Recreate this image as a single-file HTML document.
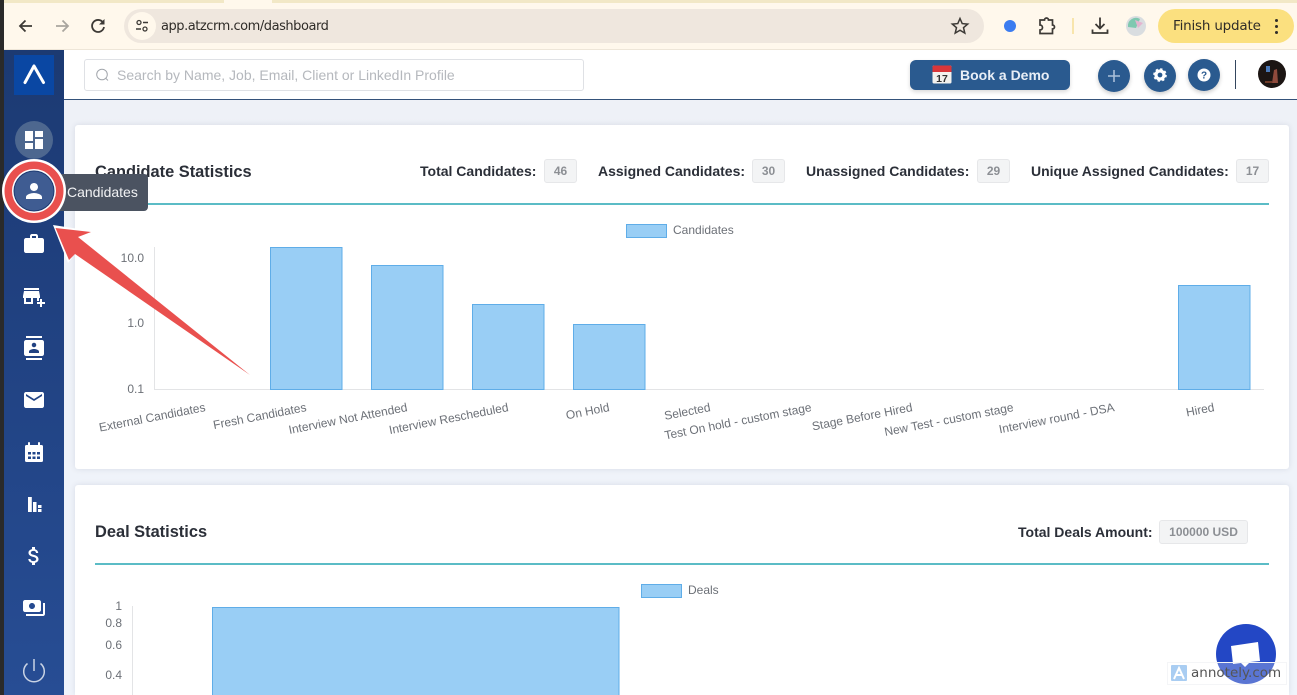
<!DOCTYPE html>
<html><head><meta charset="utf-8"><style>
html,body{margin:0;padding:0;width:1297px;height:695px;overflow:hidden}
body{background:#f0f4fb;font-family:"Liberation Sans",sans-serif}
#w{position:absolute;left:0;top:0;width:1297px;height:695px;overflow:hidden}
.a{position:absolute}
.t{position:absolute;white-space:nowrap;font-weight:700;font-size:14px;color:#2b2f38;line-height:16px}
.h{position:absolute;white-space:nowrap;font-weight:700;font-size:16.4px;color:#2b2f38;line-height:20px}
.b{position:absolute;box-sizing:border-box;background:#f3f4f5;border:1px solid #e6e7e9;border-radius:3px;color:#8c8f94;font-weight:700;font-size:12px;text-align:center;height:24px;line-height:22px}
svg text{font-family:"Liberation Sans",sans-serif}
.card{position:absolute;left:75px;width:1214px;background:#fff;border-radius:3px;box-shadow:0 0 6px rgba(60,70,100,.13)}
</style></head><body><div id="w">
<div class="a" style="left:64px;top:100px;width:1233px;height:595px;background:linear-gradient(#eef1f7,#f0f4fb)"></div>
<div class="a" style="left:0;top:0;width:4px;height:695px;background:#2a2a2a"></div>
<div class="a" style="left:4px;top:0;width:1293px;height:50px;background:#fff8ec;border-bottom:1px solid #eee6d8;box-sizing:border-box"></div>
<div class="a" style="left:4px;top:0;width:1293px;height:3px;background:#f2e8c6"></div>
<div class="a" style="left:224px;top:0;width:48px;height:3px;background:#fff8ec"></div>
<div class="a" style="left:124px;top:9px;width:860px;height:34px;border-radius:17px;background:#efe7de"></div>
<div class="a" style="left:128px;top:12px;width:28px;height:28px;border-radius:14px;background:#fff8ec"></div>
<div class="a" style="left:161px;top:18px;line-height:18px;color:#2f2c28;font-family:'DejaVu Sans',sans-serif;font-size:13px;letter-spacing:-.46px;white-space:nowrap">app.atzcrm.com/dashboard</div>
<svg class="a" style="left:0;top:0" width="1297" height="50" fill="none">
<path d="M32 26H20M25.5 20.5 20 26l5.5 5.500" stroke="#3d3a36" stroke-width="1.8"/>
<path d="M56 26H68M62.5 20.5 68 26l-5.5 5.500" stroke="#a9a59e" stroke-width="1.8"/>
<path d="M103 22.5A6 6 0 1 0 104 27" stroke="#3d3a36" stroke-width="1.8"/><path d="M104.5 19v5.500H99z" fill="#3d3a36"/>
<circle cx="139" cy="22.5" r="2" stroke="#3d3a36" stroke-width="1.3"/><path d="M143 22.5h5M136 29h5" stroke="#3d3a36" stroke-width="1.5"/><circle cx="145" cy="29" r="2" stroke="#3d3a36" stroke-width="1.3"/>
<path d="M960 18.5l2.200 5.100 5.500.5-4.200 3.600 1.300 5.400-4.800-2.900-4.800 2.900 1.300-5.400-4.200-3.600 5.500-.5z" stroke="#3d3a36" stroke-width="1.5"/>
<circle cx="1010" cy="26" r="6" fill="#3b7cf0"/>
<path d="M1040 20h4.500a2 2 0 0 1 4 0h4v5a2 2 0 0 1 0 4v4.500h-12.500v-3.500a2.500 2.500 0 0 0 0-5z" stroke="#3d3a36" stroke-width="1.7"/>
<path d="M1073 18v16" stroke="#f5df97" stroke-width="1.5"/>
<path d="M1100 17.5v10.500M1095.5 24l4.500 4.500 4.500-4.500M1092.5 29.5v3.500h15v-3.500" stroke="#3d3a36" stroke-width="1.8"/>
<circle cx="1136" cy="26" r="10" fill="#d9dde0"/><path d="M1128 27a8 8 0 0 1 12-8l-4 9z" fill="#7fc8b0"/><path d="M1135 20l8 3-5 5z" fill="#e4b5cf"/>
</svg>
<div class="a" style="left:1158px;top:9px;width:136px;height:34px;border-radius:17px;background:#fbe07f"></div>
<div class="a" style="left:1173px;top:17px;font-family:'DejaVu Sans',sans-serif;font-size:13.5px;line-height:18px;color:#2f2c28;letter-spacing:-.2px;white-space:nowrap">Finish update</div>
<div class="a" style="left:1275px;top:19px;width:3px;height:3px;border-radius:2px;background:#2f2c28;box-shadow:0 6px #2f2c28,0 12px #2f2c28"></div>

<div class="a" style="left:64px;top:50px;width:1233px;height:50px;background:#fff;border-bottom:1px solid #34527a;box-sizing:border-box"></div>
<div class="a" style="left:84px;top:59px;width:500px;height:32px;box-sizing:border-box;border:1px solid #dfe1e5;border-radius:3px;background:#fff"></div>
<svg class="a" style="left:95px;top:67px" width="16" height="16" fill="none"><circle cx="7" cy="7.5" r="5.3" stroke="#a3a7ad" stroke-width="1"/><path d="M11 11.5l2 2" stroke="#a3a7ad"/></svg>
<div class="a" style="left:117px;top:67px;font-size:14px;line-height:16px;color:#b5b8bd;white-space:nowrap">Search by Name, Job, Email, Client or LinkedIn Profile</div>

<div class="a" style="left:910px;top:60px;width:160px;height:30px;border-radius:6px;background:#2a5a8f;box-shadow:0 2px 4px rgba(0,0,0,.15)"></div>
<svg class="a" style="left:932px;top:65px" width="20" height="20"><rect x="0.5" y="0.5" width="19" height="18" rx="1.5" fill="#f3f1ee"/><path d="M0.5 7V2a1.500 1.500 0 0 1 1.500-1.500h16a1.500 1.500 0 0 1 1.500 1.500v5z" fill="#d9363a"/><text x="10" y="17" font-size="10.5" font-weight="700" text-anchor="middle" fill="#333">17</text></svg>
<div class="a" style="left:960px;top:67px;font-weight:700;font-size:14px;line-height:16px;color:#e8eef6;white-space:nowrap">Book a Demo</div>
<div class="a" style="left:1098px;top:60px;width:32px;height:32px;border-radius:16px;background:#2a5a8f;box-shadow:0 2px 4px rgba(0,0,0,.2)"></div>
<div class="a" style="left:1144px;top:60px;width:32px;height:32px;border-radius:16px;background:#2a5a8f;box-shadow:0 2px 4px rgba(0,0,0,.2)"></div>
<div class="a" style="left:1188px;top:59px;width:32px;height:32px;border-radius:16px;background:#2a5a8f;box-shadow:0 2px 4px rgba(0,0,0,.2)"></div>
<svg class="a" style="left:1090px;top:50px" width="207" height="50" fill="none">
<path d="M24 20v12M18 26h12" stroke="#a9bfd9" stroke-width="1.6"/>
<circle cx="70" cy="25" r="4" stroke="#fff" stroke-width="3.2"/><circle cx="70" cy="25" r="5.8" stroke="#fff" stroke-width="2" stroke-dasharray="2.3 2.25"/>
<circle cx="114" cy="25" r="6.5" fill="#fff"/><text x="114" y="28.5" font-size="10" font-weight="700" text-anchor="middle" fill="#2a5a8f">?</text>
<path d="M145.5 10v29" stroke="#34465e" stroke-width="1"/>
<circle cx="182" cy="24" r="14" fill="#1c1513"/><path d="M182 33l2-13 3-1 1 14z" fill="#8f4a3c"/><rect x="176" y="16" width="4" height="6" fill="#4b79b8"/><path d="M175 31h7v2h-7z" fill="#6e3a28"/>
</svg>

<div class="a" style="left:4px;top:50px;width:60px;height:645px;background:linear-gradient(#1c3a72,#1f3f7d 30%,#274d94)"></div>
<div class="a" style="left:14px;top:55px;width:40px;height:40px;background:#0a47a3"></div>
<svg class="a" style="left:14px;top:55px" width="40" height="40" fill="none"><path d="M11 27.500 20 11l9.500 16.500" stroke="#fff" stroke-width="3" stroke-linecap="round" stroke-linejoin="round"/></svg>
<div class="a" style="left:15px;top:121px;width:38px;height:38px;border-radius:19px;background:#4d678f"></div>

<div class="card" style="top:125px;height:344px"></div>
<div class="card" style="top:485px;height:210px;border-radius:3px 3px 0 0"></div>

<div class="h" style="left:95px;top:162px">Candidate Statistics</div>
<div class="t" style="left:420px;top:163px">Total Candidates:</div>
<div class="b" style="left:544px;top:159px;width:33px">46</div>
<div class="t" style="left:598px;top:163px">Assigned Candidates:</div>
<div class="b" style="left:752px;top:159px;width:33px">30</div>
<div class="t" style="left:806px;top:163px">Unassigned Candidates:</div>
<div class="b" style="left:977px;top:159px;width:33px">29</div>
<div class="t" style="left:1031px;top:163px">Unique Assigned Candidates:</div>
<div class="b" style="left:1236px;top:159px;width:33px">17</div>
<div class="a" style="left:95px;top:203px;width:1174px;height:2px;background:#5bbcc6"></div>

<svg class="a" style="left:0;top:0" width="1297" height="695" font-size="12" fill="#6c7077">
<rect x="626.5" y="224.5" width="40" height="13" fill="#99cef5" stroke="#5fade8"/>
<text x="673" y="234">Candidates</text>
<path d="M154.5 247v143M154 389.5h1110" stroke="#e3e4e6" fill="none"/>
<text x="144" y="262" text-anchor="end">10.0</text><text x="144" y="327" text-anchor="end">1.0</text><text x="144" y="393" text-anchor="end">0.1</text>
<g fill="#99cef5" stroke="#5fade8">
<rect x="270.5" y="247.5" width="71.500" height="142"/>
<rect x="371.5" y="265.5" width="71.500" height="124"/>
<rect x="472.5" y="304.5" width="71.500" height="85"/>
<rect x="573.5" y="324.5" width="71.500" height="65"/>
<rect x="1178.5" y="285.5" width="71.500" height="104"/>
</g>
<g text-anchor="end">
<text transform="translate(206,411) rotate(-11)">External Candidates</text>
<text transform="translate(307,411) rotate(-11)">Fresh Candidates</text>
<text transform="translate(408,411) rotate(-11)">Interview Not Attended</text>
<text transform="translate(509,411) rotate(-11)">Interview Rescheduled</text>
<text transform="translate(610,411) rotate(-11)">On Hold</text>
<text transform="translate(711,411) rotate(-11)">Selected</text>
<text transform="translate(812,411) rotate(-11)">Test On hold - custom stage</text>
<text transform="translate(913,411) rotate(-11)">Stage Before Hired</text>
<text transform="translate(1014,411) rotate(-11)">New Test - custom stage</text>
<text transform="translate(1115,411) rotate(-11)">Interview round - DSA</text>
<text transform="translate(1215,411) rotate(-11)">Hired</text>
</g>
<rect x="641.5" y="584.5" width="40" height="13" fill="#99cef5" stroke="#5fade8"/>
<text x="688" y="594">Deals</text>
<path d="M132.5 606v89" stroke="#e3e4e6" fill="none"/>
<text x="122" y="610" text-anchor="end">1</text><text x="122" y="627" text-anchor="end">0.8</text><text x="122" y="649" text-anchor="end">0.6</text><text x="122" y="679" text-anchor="end">0.4</text>
<rect x="212.5" y="607.5" width="406.500" height="90" fill="#99cef5" stroke="#5fade8"/>
</svg>

<div class="h" style="left:95px;top:522px">Deal Statistics</div>
<div class="t" style="left:1018px;top:524px">Total Deals Amount:</div>
<div class="b" style="left:1159px;top:520px;width:89px">100000 USD</div>
<div class="a" style="left:95px;top:563px;width:1174px;height:2px;background:#5bbcc6"></div>

<svg class="a" style="left:0;top:0" width="70" height="695" fill="#fff">
<path transform="translate(22,128)" d="M3 13h8V3H3v10zm0 8h8v-6H3v6zm10 0h8V11h-8v10zm0-18v6h8V3h-8z"/>
<path transform="translate(22,232)" d="M20 6h-4V4c0-1.110-.89-2-2-2h-4c-1.110 0-2 .89-2 2v2H4c-1.110 0-1.990.89-1.990 2L2 19c0 1.110.89 2 2 2h16c1.110 0 2-.89 2-2V8c0-1.110-.89-2-2-2zm-6 0h-4V4h4v2z"/>
<path transform="translate(22,284)" d="M15 17h2v-3h1v-2l-1-5H2l-1 5v2h1v6h9v-6h4v3zm-6 1H4v-4h5v4zM2 4h15v2H2zM20 18v-3h-2v3h-3v2h3v3h2v-3h3v-2z"/>
<path transform="translate(22,336)" d="M20 0H4v2h16V0zM4 24h16v-2H4v2zM20 4H4c-1.100 0-2 .9-2 2v12c0 1.100.9 2 2 2h16c1.100 0 2-.9 2-2V6c0-1.100-.9-2-2-2zm-8 2.750c1.240 0 2.250 1.010 2.250 2.250s-1.010 2.250-2.250 2.250S9.750 10.240 9.750 9 10.760 6.750 12 6.750zM17 17H7v-1.500c0-1.670 3.330-2.500 5-2.500s5 .83 5 2.500V17z"/>
<path transform="translate(22,388)" d="M20 4H4c-1.100 0-1.990.9-1.990 2L2 18c0 1.100.9 2 2 2h16c1.100 0 2-.9 2-2V6c0-1.100-.9-2-2-2zm0 4l-8 5-8-5V6l8 5 8-5v2z"/>
<rect x="25" y="445" width="18" height="17" rx="1.500"/><rect x="28" y="442" width="2" height="4" rx="1"/><rect x="38" y="442" width="2" height="4" rx="1"/>
<g fill="#22468a"><rect x="28" y="452" width="3" height="2.500"/><rect x="32.500" y="452" width="3" height="2.500"/><rect x="37" y="452" width="3" height="2.500"/><rect x="28" y="456.500" width="3" height="2.500"/><rect x="32.500" y="456.500" width="3" height="2.500"/><rect x="37" y="456.500" width="3" height="2.500"/></g>
<rect x="28" y="497" width="3.800" height="15"/><rect x="33" y="502" width="3.500" height="10"/><rect x="38" y="505" width="3.500" height="3"/><rect x="38" y="509" width="3.500" height="3"/>
<path transform="translate(22,544)" d="M11.800 10.900c-2.270-.59-3-1.200-3-2.150 0-1.090 1.010-1.850 2.700-1.850 1.780 0 2.440.85 2.500 2.100h2.210c-.07-1.720-1.120-3.300-3.210-3.810V3h-3v2.160c-1.940.42-3.500 1.680-3.500 3.610 0 2.310 1.910 3.460 4.700 4.130 2.500.6 3 1.480 3 2.410 0 .69-.49 1.790-2.700 1.790-2.060 0-2.870-.92-2.980-2.100h-2.200c.12 2.190 1.760 3.420 3.680 3.830V21h3v-2.150c1.950-.37 3.500-1.500 3.500-3.550 0-2.840-2.430-3.810-4.700-4.400z"/>
<path transform="translate(22,596)" d="M19 14V6c0-1.100-.9-2-2-2H3c-1.100 0-2 .9-2 2v8c0 1.100.9 2 2 2h14c1.100 0 2-.9 2-2zm-9-1c-1.660 0-3-1.340-3-3s1.340-3 3-3 3 1.340 3 3-1.340 3-3 3zm13-6v11c0 1.100-.9 2-2 2H4v-2h17V7h2z"/>
<path d="M34 659v12" stroke="#c9d3e4" stroke-width="1.500" fill="none"/><path d="M27.500 663.500a10.300 10.300 0 1 0 13 0" stroke="#c9d3e4" stroke-width="1.500" fill="none"/>
</svg>

<div class="a" style="left:50px;top:174px;width:98px;height:37px;background:#4b5361;border-radius:0 4px 4px 0"></div>
<div class="a" style="left:67px;top:184px;font-size:14px;line-height:16px;color:#f1f2f4;white-space:nowrap">Candidates</div>
<svg class="a" style="left:0;top:150px" width="300" height="240">
<circle cx="34" cy="41" r="32" fill="#fff"/>
<circle cx="34" cy="41" r="29.500" fill="#e9504e"/>
<circle cx="34" cy="41" r="22" fill="#fff"/>
<circle cx="34" cy="41" r="20.500" fill="#1c3a72"/>
<circle cx="34" cy="41" r="19.500" fill="#3f5c92"/>
<path transform="translate(22,29)" d="M12 12c2.210 0 4-1.790 4-4s-1.790-4-4-4-4 1.790-4 4 1.790 4 4 4zm0 2c-2.670 0-8 1.340-8 4v2h16v-2c0-2.660-5.330-4-8-4z" fill="#fff"/>
<path d="M53 75 92 81 68 113z" fill="#fff"/>
<path d="M55.500 78 91 82 78 87 250 225 75 104 69 110z" fill="#e9504e"/>
</svg>

<div class="a" style="left:1216px;top:624px;width:60px;height:60px;border-radius:30px;background:#2347c5"></div>
<svg class="a" style="left:1216px;top:624px" width="60" height="60"><path d="M15 22 42 18 44 37 34 38 29 43 25 39 17 40z" fill="#fff"/></svg>
<div class="a" style="left:1167px;top:662px;width:120px;height:23px;background:rgba(255,255,255,.25);border:1px solid #f4f5f7;box-sizing:border-box"></div>
<svg class="a" style="left:1171px;top:665px" width="16" height="16"><rect width="16" height="16" rx="1" fill="#a9cdf2"/><path d="M3 14 8 3l5 11M5 10h6" stroke="#fff" stroke-width="2" fill="none"/></svg>
<div class="a" style="left:1191px;top:665px;font-family:'DejaVu Sans',sans-serif;font-size:13.5px;line-height:16px;color:#555;white-space:nowrap">annotely.com</div>
</div></body></html>
